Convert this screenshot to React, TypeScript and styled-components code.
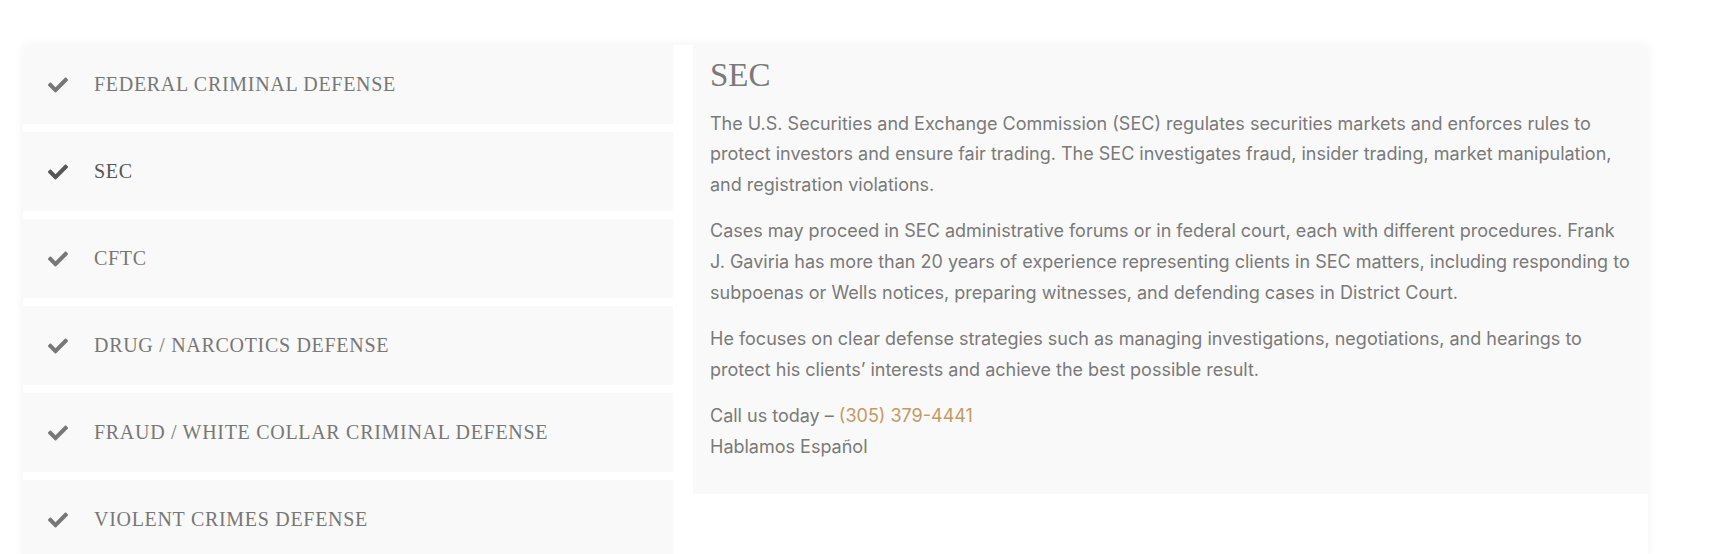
import React from "react";
import styled, { createGlobalStyle } from "styled-components";
import { FaCheck } from "react-icons/fa";

const GlobalStyle = createGlobalStyle`
  body {
    margin: 0;
    background: #ffffff;
    font-family: "Inter", "Noto Sans", sans-serif;
  }
`;

const Page = styled.div`
  padding: 45px 0 0 23px;
`;

const Tabs = styled.div`
  display: flex;
  align-items: flex-start;
  gap: 20px;
  width: 1625px;
  background: #ffffff;
  box-shadow: 0 0 10px rgba(0, 0, 0, 0.05);
`;

const TabList = styled.div`
  display: flex;
  flex-direction: column;
  gap: 8px;
  width: 650px;
  flex-shrink: 0;
`;

const TabItem = styled.div<{ $active?: boolean }>`
  display: flex;
  align-items: center;
  gap: 26px;
  height: 79px;
  padding-left: 25px;
  background: #f9f9f9;
  color: ${(p) => (p.$active ? "#555555" : "#777777")};
  cursor: pointer;

  svg {
    flex-shrink: 0;
  }
`;

const TabTitle = styled.span`
  font-family: "Liberation Serif", "DejaVu Serif", serif;
  font-size: 20px;
  text-transform: uppercase;
  letter-spacing: 0.7px;
`;

const Panel = styled.div`
  flex: 1;
  box-sizing: border-box;
  height: 449px;
  padding: 11px 18px 0 17px;
  background: #f9f9f9;
  color: #7a7a7a;
`;

const Heading = styled.h2`
  margin: 0 0 13px;
  font-family: "Liberation Serif", "DejaVu Serif", serif;
  font-weight: 400;
  font-size: 33px;
  line-height: 1.2;
  color: #7a7a7a;
`;

const Text = styled.p`
  margin: 0 0 16px;
  font-size: 18px;
  line-height: 1.7;
`;

const Phone = styled.a`
  color: #c29a63;
  text-decoration: none;
`;

const items = [
  "Federal Criminal Defense",
  "SEC",
  "CFTC",
  "Drug / Narcotics Defense",
  "Fraud / White Collar Criminal Defense",
  "Violent Crimes Defense",
];

export default function App() {
  const active = "SEC";
  return (
    <>
      <GlobalStyle />
      <Page>
        <Tabs>
          <TabList>
            {items.map((item) => (
              <TabItem key={item} $active={item === active}>
                <FaCheck size={20} />
                <TabTitle>{item}</TabTitle>
              </TabItem>
            ))}
          </TabList>
          <Panel>
            <Heading>SEC</Heading>
            <Text>
              The U.S. Securities and Exchange Commission (SEC) regulates securities markets and
              enforces rules to protect investors and ensure fair trading. The SEC investigates
              fraud, insider trading, market manipulation, and registration violations.
            </Text>
            <Text>
              Cases may proceed in SEC administrative forums or in federal court, each with
              different procedures. Frank J. Gaviria has more than 20 years of experience
              representing clients in SEC matters, including responding to subpoenas or Wells
              notices, preparing witnesses, and defending cases in District Court.
            </Text>
            <Text>
              He focuses on clear defense strategies such as managing investigations, negotiations,
              and hearings to protect his clients’ interests and achieve the best possible result.
            </Text>
            <Text>
              Call us today – <Phone href="tel:3053794441">(305) 379-4441</Phone>
              <br />
              Hablamos Español
            </Text>
          </Panel>
        </Tabs>
      </Page>
    </>
  );
}
